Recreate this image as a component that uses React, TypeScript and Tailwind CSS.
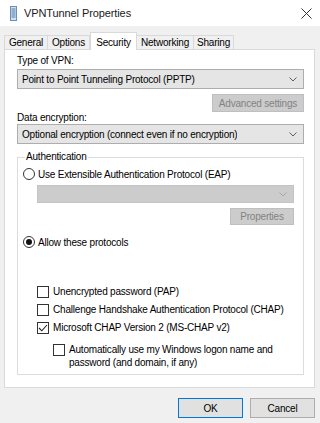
import React from 'react';

function Chevron({ color = '#5f5f5f' }: { color?: string }) {
  return (
    <svg width="8" height="5" viewBox="0 0 8 5" className="shrink-0">
      <path d="M0.5 0.5 L4 4 L7.5 0.5" fill="none" stroke={color} strokeWidth="1" />
    </svg>
  );
}

function Select({ text, disabled = false, className = '' }: { text?: string; disabled?: boolean; className?: string }) {
  return (
    <div
      className={
        'flex items-center justify-between border pl-[4px] pr-[6px] ' +
        (disabled ? 'border-[#c4c4c4] bg-[#cccccc] ' : 'border-[#adadad] bg-[#e5e5e5] ') +
        className
      }
    >
      <span className="truncate">{text}</span>
      <Chevron color={disabled ? '#a6a6a6' : '#5f5f5f'} />
    </div>
  );
}

function Radio({ checked, label }: { checked?: boolean; label: string }) {
  return (
    <div className="flex h-[14px] items-center gap-[3px]">
      <span className="flex h-[12px] w-[12px] items-center justify-center rounded-full border border-[#333333] bg-white">
        {checked && <span className="h-[6px] w-[6px] rounded-full bg-[#111111]" />}
      </span>
      <span>{label}</span>
    </div>
  );
}

function Check({ checked, tight, children }: { checked?: boolean; tight?: boolean; children: React.ReactNode }) {
  return (
    <div className="flex items-start gap-[4px]">
      <span className="mt-[1px] flex h-[12px] w-[12px] shrink-0 items-center justify-center border border-[#333333] bg-white">
        {checked && (
          <svg width="10" height="8" viewBox="0 0 10 8">
            <path d="M1 4 L3.8 6.8 L9 1" fill="none" stroke="#222" strokeWidth="1.1" />
          </svg>
        )}
      </span>
      <span className={tight ? 'leading-[13px]' : 'leading-[14px]'}>{children}</span>
    </div>
  );
}

const tabs = [
  { name: 'General', w: 'w-[44px]' },
  { name: 'Options', w: 'w-[43px]' },
  { name: 'Security', w: 'w-[47px]', active: true },
  { name: 'Networking', w: 'w-[58px]' },
  { name: 'Sharing', w: 'w-[41px]' },
];

export default function App() {
  return (
    <div className="flex h-[423px] w-[320px] flex-col overflow-hidden bg-[#f0f0f0] font-['Liberation_Sans',Arial,sans-serif] text-[10px] tracking-[-0.2px] text-black">
      {/* title bar */}
      <div className="flex h-[26px] shrink-0 items-center bg-white pl-[10px] pr-[7px]">
        <svg width="7" height="15" viewBox="0 0 7 15" className="shrink-0">
          <rect x="0.5" y="0.5" width="6" height="14" fill="#cfe0f2" stroke="#6d8fb5" />
          <path d="M1.5 3h4M1.5 5h4M1.5 7h4M1.5 9h4M1.5 11h4" stroke="#4e7db3" strokeWidth="1" />
        </svg>
        <span className="ml-[7px] text-[11px] tracking-[-0.1px] text-[#1a1a1a]">VPNTunnel Properties</span>
        <svg width="11" height="11" viewBox="0 0 11 11" className="ml-auto mr-[1px]">
          <path d="M0.5 0.5 L10.5 10.5 M10.5 0.5 L0.5 10.5" stroke="#333" strokeWidth="1" />
        </svg>
      </div>

      {/* tabs */}
      <div className="flex h-[23px] shrink-0 items-end px-[4px]">
        {tabs.map((t) =>
          t.active ? (
            <div
              key={t.name}
              className={`relative z-10 -mb-px flex h-[18px] items-start justify-center border border-b-0 border-[#d9d9d9] bg-white pt-[2px] ${t.w}`}
            >
              {t.name}
            </div>
          ) : (
            <div
              key={t.name}
              className={`-ml-px flex h-[14px] items-center justify-center border border-b-0 border-[#d9d9d9] bg-[#f0f0f0] first:ml-0 ${t.w}`}
            >
              {t.name}
            </div>
          )
        )}
      </div>

      {/* panel */}
      <div className="mx-[4px] flex h-[339px] w-[311px] flex-col border border-[#d9d9d9] bg-white pl-[12px] pr-[10px] pt-[4px]">
        <div className="h-[14px] leading-[14px]">Type of VPN:</div>
        <Select className="mt-[1px] h-[20px]" text="Point to Point Tunneling Protocol (PPTP)" />
        <div className="mt-[5px] flex justify-end">
          <div className="flex h-[18px] w-[92px] items-center justify-center border border-[#bfbfbf] bg-[#cccccc] text-[#838383]">
            Advanced settings
          </div>
        </div>
        <div className="h-[12px] leading-[12px]">Data encryption:</div>
        <Select className="h-[20px]" text="Optional encryption (connect even if no encryption)" />

        <div className="relative mt-[13px] flex h-[218px] flex-col border border-[#dcdcdc] pl-[5px] pr-[9px] pt-[9px]">
          <span className="absolute -top-[7px] left-[7px] bg-white px-[1px] leading-[12px]">Authentication</span>
          <Radio label="Use Extensible Authentication Protocol (EAP)" />
          <Select disabled className="ml-[14px] mt-[4px] h-[18px]" />
          <div className="mt-[5px] flex justify-end">
            <div className="flex h-[17px] w-[64px] items-center justify-center border border-[#bfbfbf] bg-[#cccccc] text-[#838383]">
              Properties
            </div>
          </div>
          <div className="mt-[10px]">
            <Radio checked label="Allow these protocols" />
          </div>
          <div className="ml-[14px] mt-[36px] flex flex-col gap-[4px]">
            <Check>Unencrypted password (PAP)</Check>
            <Check>Challenge Handshake Authentication Protocol (CHAP)</Check>
            <Check checked>Microsoft CHAP Version 2 (MS-CHAP v2)</Check>
            <div className="ml-[16px] mt-[4px]">
              <Check tight>
                Automatically use my Windows logon name and
                <br />
                password (and domain, if any)
              </Check>
            </div>
          </div>
        </div>
      </div>

      {/* buttons */}
      <div className="mt-[10px] flex justify-end gap-[7px] pr-[5px]">
        <div className="flex h-[20px] w-[65px] items-center justify-center border border-[#0078d7] bg-[#e1e1e1]">
          OK
        </div>
        <div className="flex h-[20px] w-[65px] items-center justify-center border border-[#adadad] bg-[#e1e1e1]">
          Cancel
        </div>
      </div>
    </div>
  );
}
